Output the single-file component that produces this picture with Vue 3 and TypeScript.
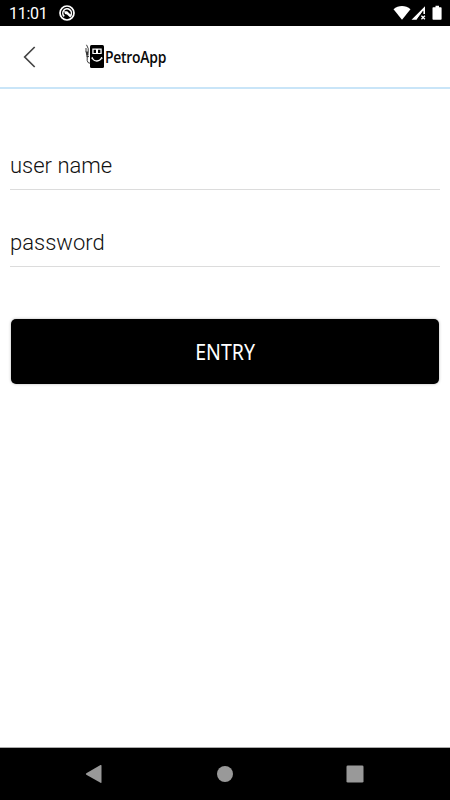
<script setup lang="ts">
import { ref } from 'vue'

const userName = ref('')
const password = ref('')
</script>

<template>
  <div class="screen">
    <div class="status">
      <span class="clock">11:01</span>
      <svg class="notice" width="16" height="16" viewBox="0 0 16 16">
        <circle cx="8" cy="8" r="7" fill="none" stroke="#fff" stroke-width="1.7" />
        <path d="M5.200 11.300A4.300 4.300 0 1 1 11.500 10.800" fill="none" stroke="#fff" stroke-width="1.600" />
        <path d="M5 6.200 8.200 6.200l4.600 4.600-1.600 1.700L8 9.500 6 9z" fill="#fff" />
      </svg>
      <svg class="signals" width="50" height="16" viewBox="0 0 50 16">
        <path d="M0.500 4.200C5.400-0.100 12.600-0.100 17.500 4.200L9 14.700z" fill="#fff" />
        <path d="M18.500 14.700 32 1.200V9h-2V6l-6.500 8.700z" fill="#fff" />
        <path d="M25.300 12.600 30.400 5.600V9.200H27.500V14.700H24z" fill="#000" />
        <path d="m28.400 10.800 3.500 3.500m0-3.500-3.500 3.500" stroke="#fff" stroke-width="1.300" />
        <path d="M40.300 2.200H42.500V.8h3.500v1.400h1.800q.8 0 .8.800v11q0 .8-.8.800h-7.500q-.8 0-.8-.8V3q0-.8.8-.8z" fill="#fff" />
      </svg>
    </div>

    <header class="header">
      <button class="back" type="button" aria-label="Back">
        <svg width="14" height="22" viewBox="0 0 14 22">
          <path d="M11.700 1 1.700 11l10 10" fill="none" stroke="#444" stroke-width="1.700" />
        </svg>
      </button>
      <div class="brand">
        <svg width="20" height="26" viewBox="0 0 20 26">
          <path d="M6.500 1h11q1.500 0 1.500 1.500v20q0 1.500-1.500 1.500h-11Q5 24 5 22.500v-20Q5 1 6.500 1z" fill="#000" />
          <path d="M7.300 4.500h9.400v5.500H7.300z" fill="#fff" />
          <path d="M8.600 5.700h2.400V9H8.600zM13 5.700h2.400V9H13z" fill="#000" />
          <path d="M7.200 13.600c1.500 4.500 7.800 4.500 9.500 0" fill="none" stroke="#fff" stroke-width="1.300" />
          <path d="m6.300 14.300 1.400-1m8.400 0 1.500 1" stroke="#fff" stroke-width=".9" />
          <path d="M1.500.8 3.200 4.500v3L2 10.200M1 4v3.500l1 2v3.300l2-.3M2.200 12v4.500q.3 2.800 3 2.800" fill="none" stroke="#222" stroke-width=".9" />
          <path d="M.5 7.500h3v4h-2z" fill="#333" />
        </svg>
        <span class="brand-name">PetroApp</span>
      </div>
    </header>

    <form class="form" @submit.prevent>
      <input v-model="userName" class="field" type="text" placeholder="user name" />
      <input v-model="password" class="field second" type="password" placeholder="password" />
      <button class="entry" type="submit"><span class="entry-label">ENTRY</span></button>
    </form>

    <nav class="nav">
      <svg width="18" height="20" viewBox="0 0 18 20">
        <path d="M1.300 9.300 15.500 1.100q1-.4 1 .6v16.600q0 1-1 .5L1.300 10.700q-1-.7 0-1.400z" fill="#999" />
      </svg>
      <svg width="18" height="18" viewBox="0 0 18 18">
        <circle cx="9" cy="9" r="8" fill="#999" />
      </svg>
      <svg width="18" height="18" viewBox="0 0 18 18">
        <rect x=".5" y=".5" width="17" height="17" rx="1.300" fill="#999" />
      </svg>
    </nav>
  </div>
</template>

<style>
body {
  margin: 0;
  background: #fff;
}
</style>

<style scoped>
.screen {
  display: flex;
  flex-direction: column;
  width: 450px;
  height: 800px;
  background: #fff;
  font-family: Roboto, sans-serif;
}
.status {
  box-sizing: border-box;
  display: flex;
  align-items: center;
  height: 26px;
  padding: 0 7px 0 9px;
  background: #000;
  color: #fff;
}
.clock {
  width: 50px;
  padding-top: 1px;
  font-size: 16px;
  line-height: 26px;
  letter-spacing: -0.3px;
}
.signals {
  margin-left: auto;
}
.header {
  box-sizing: border-box;
  display: flex;
  align-items: center;
  height: 63px;
  padding-left: 23px;
  border-bottom: 2px solid #c9e5f8;
}
.back {
  display: flex;
  width: 62px;
  padding: 0;
  border: 0;
  background: none;
}
.brand {
  display: flex;
  align-items: center;
}
.brand-name {
  color: #0a0a0a;
  font: 600 16px/20px "Open Sans", sans-serif;
  letter-spacing: -0.3px;
  transform: scaleX(0.87);
  transform-origin: left center;
}
.form {
  display: flex;
  flex: 1;
  flex-direction: column;
  padding: 53px 10px 0;
}
.field {
  box-sizing: border-box;
  width: 100%;
  height: 48px;
  padding: 0 0 1px;
  border: 0;
  border-bottom: 1px solid #dcdcdc;
  border-radius: 0;
  outline: none;
  background: none;
  color: #111;
  font: 300 22px/26px Roboto, sans-serif;
}
.field::placeholder {
  color: #111;
  opacity: 1;
}
.second {
  margin-top: 29px;
}
.entry {
  height: 65px;
  margin: 52px 1px 0;
  padding: 0;
  border: 0;
  border-radius: 5px;
  background: #000;
  box-shadow: 0 0 3px rgba(0, 0, 0, 0.3);
  color: #fff;
  font: 400 21px/28px "Noto Sans", sans-serif;
}
.entry-label {
  display: inline-block;
  transform: scaleX(0.93);
}
.nav {
  box-sizing: border-box;
  display: flex;
  align-items: center;
  justify-content: space-between;
  height: 53px;
  padding: 0 86px 0 85px;
  border-top: 1px solid #aaa;
  background: #000;
}
</style>
